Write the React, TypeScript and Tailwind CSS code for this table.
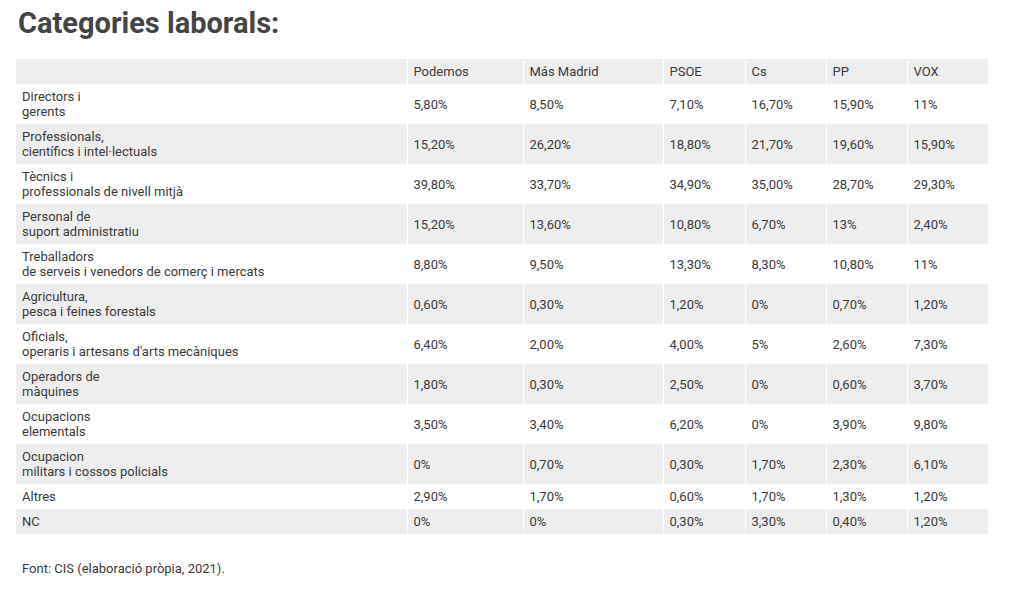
const parties = ["Podemos", "Más Madrid", "PSOE", "Cs", "PP", "VOX"];

// Column widths in px, first column is the category label.
const widths = ["w-[391px]", "w-[116px]", "w-[140px]", "w-[82px]", "w-[81px]", "w-[81px]", "w-[81px]"];

const rows: { label: string[]; values: string[] }[] = [
  { label: ["Directors i", "gerents"], values: ["5,80%", "8,50%", "7,10%", "16,70%", "15,90%", "11%"] },
  { label: ["Professionals,", "científics i intel·lectuals"], values: ["15,20%", "26,20%", "18,80%", "21,70%", "19,60%", "15,90%"] },
  { label: ["Tècnics i", "professionals de nivell mitjà"], values: ["39,80%", "33,70%", "34,90%", "35,00%", "28,70%", "29,30%"] },
  { label: ["Personal de", "suport administratiu"], values: ["15,20%", "13,60%", "10,80%", "6,70%", "13%", "2,40%"] },
  { label: ["Treballadors", "de serveis i venedors de comerç i mercats"], values: ["8,80%", "9,50%", "13,30%", "8,30%", "10,80%", "11%"] },
  { label: ["Agricultura,", "pesca i feines forestals"], values: ["0,60%", "0,30%", "1,20%", "0%", "0,70%", "1,20%"] },
  { label: ["Oficials,", "operaris i artesans d'arts mecàniques"], values: ["6,40%", "2,00%", "4,00%", "5%", "2,60%", "7,30%"] },
  { label: ["Operadors de", "màquines"], values: ["1,80%", "0,30%", "2,50%", "0%", "0,60%", "3,70%"] },
  { label: ["Ocupacions", "elementals"], values: ["3,50%", "3,40%", "6,20%", "0%", "3,90%", "9,80%"] },
  { label: ["Ocupacion", "militars i cossos policials"], values: ["0%", "0,70%", "0,30%", "1,70%", "2,30%", "6,10%"] },
  { label: ["Altres"], values: ["2,90%", "1,70%", "0,60%", "1,70%", "1,30%", "1,20%"] },
  { label: ["NC"], values: ["0%", "0%", "0,30%", "3,30%", "0,40%", "1,20%"] },
];

/** Striped table of job categories by party vote. */
export default function App() {
  return (
    <div className="min-h-[594px] w-[1016px] bg-white pl-4 pt-[7px] font-['Roboto',sans-serif] text-[#3a3a3a]">
      <h1 className="pl-[2px] text-[29px] font-bold leading-[33px] text-[#444444]">Categories laborals:</h1>

      <table className="mt-[19px] table-fixed border-collapse text-[13px] leading-[15px]">
        <thead>
          <tr className="bg-[#eeeeee]">
            <th className={`${widths[0]} h-[25px] px-[6px] text-left font-normal`} />
            {parties.map((p, i) => (
              <th key={p} className={`${widths[i + 1]} border-l border-white px-[6px] text-left font-normal`}>
                {p}
              </th>
            ))}
          </tr>
        </thead>
        <tbody>
          {rows.map((row, r) => (
            <tr key={row.label[0]} className={r % 2 === 1 ? "bg-[#eeeeee]" : "bg-white"}>
              <td className={`${row.label.length > 1 ? "h-[40px]" : "h-[25px]"} px-[6px] align-middle`}>
                {row.label.map((line) => (
                  <div key={line}>{line}</div>
                ))}
              </td>
              {row.values.map((v, i) => (
                <td key={i} className="border-l border-white px-[6px] align-middle">
                  {v}
                </td>
              ))}
            </tr>
          ))}
        </tbody>
      </table>

      <p className="mt-[27px] pl-[6px] text-[13px] leading-[15px]">Font: CIS (elaboració pròpia, 2021).</p>
    </div>
  );
}
